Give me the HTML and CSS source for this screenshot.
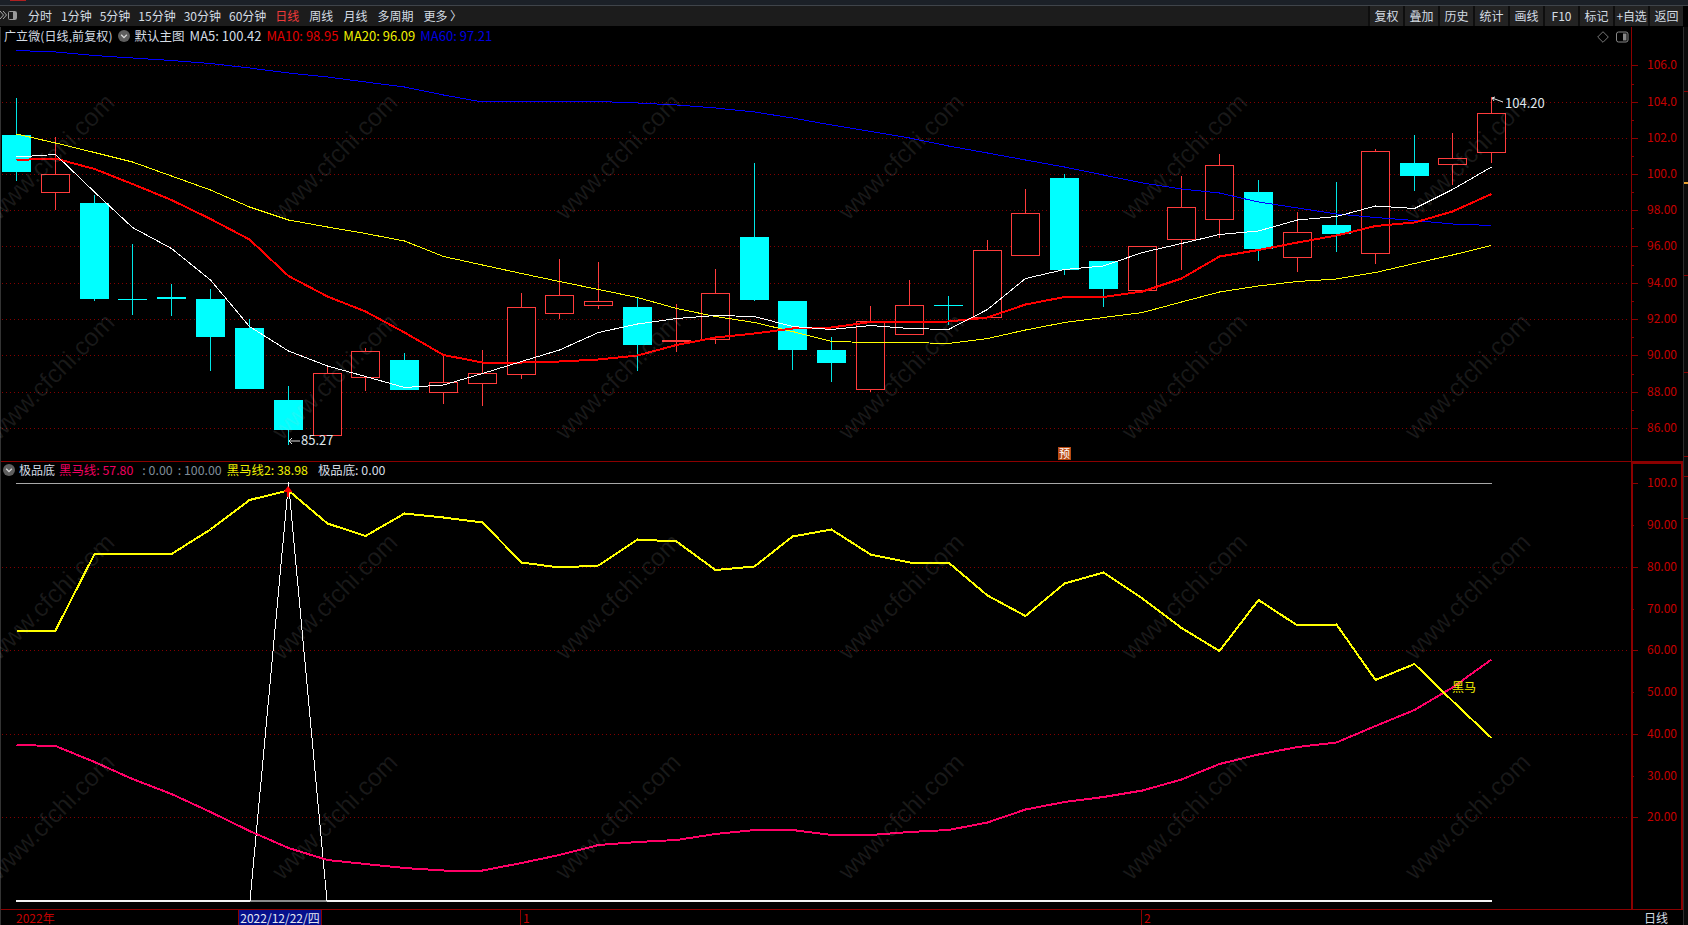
FILE: index.html
```html
<!DOCTYPE html>
<html lang="zh-CN">
<head>
<meta charset="utf-8">
<title>广立微 K线</title>
<link rel="stylesheet" href="styles.css">
</head>
<body>
<div class="titlestrip"><span class="titlemark"></span></div>
<header class="toolbar">
  <svg class="panel-toggle" width="18" height="12" viewBox="0 0 18 12"><path d="M0 1l3.5 4L0 9M3 1l3.5 4L3 9" fill="none" stroke="#a9a9a9"/><rect x="8.5" y="1.5" width="8" height="8" rx="1" fill="none" stroke="#9a9a9a"/><rect x="13" y="2" width="3" height="7" fill="#9a9a9a"/></svg>
  <nav class="periods">
    <span class="cn">分时</span><span>1分钟</span><span>5分钟</span><span>15分钟</span><span>30分钟</span><span>60分钟</span>
    <span class="cn active">日线</span><span class="cn">周线</span><span class="cn">月线</span><span class="cn">多周期</span><span class="cn">更多 〉</span>
  </nav>
  <div class="actions">
    <span>复权</span><span>叠加</span><span>历史</span><span>统计</span><span>画线</span><span>F10</span><span>标记</span><span class="tight">+自选</span><span>返回</span>
  </div>
</header>
<main class="workspace">
  <div class="charts">
    <section class="pane price">
      <div class="plot">
        <svg id="priceChart" class="chart" width="1631" height="434" viewBox="0 27 1631 434"></svg>
        <div class="legend">
          <span class="name title">广立微(日线,前复权)</span>
          <svg class="chevron" width="12" height="12" viewBox="0 0 12 12"><circle cx="6" cy="6" r="6" fill="#5e5e5e"/><path d="M3.2 4.8L6 7.6l2.8-2.8" fill="none" stroke="#d8d8d8" stroke-width="1.3"/></svg>
          <span class="name cjk">默认主图</span>
          <span class="name">MA5: 100.42</span>
          <span class="red">MA10: 98.95</span>
          <span class="yellow">MA20: 96.09</span>
          <span class="blue">MA60: 97.21</span>
        </div>
        <div class="plot-tools">
          <svg width="12" height="12" viewBox="0 0 12 12"><path d="M6 .7L11.3 6 6 11.3.7 6z" fill="none" stroke="#777"/></svg>
          <svg width="13" height="12" viewBox="0 0 13 12"><rect x=".5" y="1" width="11.5" height="10" rx="2" fill="none" stroke="#888"/><rect x="7" y="2.5" width="3.5" height="7" fill="#888"/></svg>
        </div>
        <span class="note note-high">104.20</span>
        <span class="note note-low">85.27</span>
        <span class="badge">预</span>
      </div>
      <div class="axis" id="priceAxis"></div>
    </section>
    <section class="pane indicator">
      <div class="plot">
        <svg id="indicatorChart" class="chart" width="1631" height="447" viewBox="0 462 1631 447"></svg>
        <div class="legend lower">
          <svg class="chevron first" width="12" height="12" viewBox="0 0 12 12"><circle cx="6" cy="6" r="6" fill="#5e5e5e"/><path d="M3.2 4.8L6 7.6l2.8-2.8" fill="none" stroke="#d8d8d8" stroke-width="1.3"/></svg>
          <span class="name cjk">极品底</span>
          <span class="pink">黑马线: 57.80</span>
          <span class="muted gap-a">: 0.00</span>
          <span class="muted">: 100.00</span>
          <span class="yellow">黑马线2: 38.98</span>
          <span class="name gap-b">极品底: 0.00</span>
        </div>
        <span class="note note-horse">黑马</span>
      </div>
      <div class="axis boxed" id="indicatorAxis"></div>
    </section>
    <footer class="timeline">
      <div class="dates">
        <span class="year">2022年</span>
        <span class="current-date">2022/12/22/四</span>
        <span class="month month-jan">1</span>
        <span class="month month-feb">2</span>
      </div>
      <div class="period-label">日线</div>
    </footer>
  </div>
  <aside class="sidebar" id="sidebar"></aside>
</main>
<script src="chart.js"></script>
</body>
</html>
```
FILE: styles.css
```css
* { box-sizing: border-box; }
html, body { margin: 0; height: 100%; }
body {
  width: 1688px;
  height: 925px;
  overflow: hidden;
  background: #000;
  color: #d4dce4;
  font: 12px/16px "Noto Sans CJK SC", "Noto Sans", sans-serif;
  display: flex;
  flex-direction: column;
}
.titlestrip {
  height: 6px;
  background: #1b2027;
  border-bottom: 1px solid #3f444a;
  padding-left: 10px;
  flex: none;
}
.titlemark { display: block; width: 16px; height: 1px; background: #b02020; }
.toolbar {
  height: 21px;
  flex: none;
  display: flex;
  align-items: center;
  background: #1c1c1c;
  border-bottom: 1px solid #000;
  width: 1683px;
  position: relative;
}
.panel-toggle { flex: none; margin-left: 0; }
.periods { display: flex; gap: 8px; margin-left: 9px; white-space: nowrap; }
.periods .cn { padding: 0 1px; }
.periods .active { color: #f03a3a; }
.actions { margin-left: auto; display: flex; height: 20px; }
.actions span {
  width: 35px;
  text-align: center;
  line-height: 19px;
  background: #232323;
  border-left: 2px solid #0e0e0e;
  white-space: nowrap;
}
.actions .tight { letter-spacing: -0.3px; }
.workspace { flex: 1; display: flex; min-height: 0; }
.charts { width: 1683px; display: flex; flex-direction: column; border-left: 1px solid #333; }
.pane { display: flex; flex: none; }
.pane.price { height: 434px; }
.pane.indicator { height: 448px; border-top: 1px solid #8b0000; }
.plot { position: relative; width: 1630px; flex: none; }
.chart { position: absolute; left: -1px; top: 0; display: block; }
.legend {
  position: relative;
  display: flex;
  align-items: center;
  height: 20px;
  padding: 0 0 2px 3px;
  white-space: nowrap;
  gap: 5px;
  font-size: 13px;
}
.legend.lower { height: 17px; padding: 0 0 2px 2px; gap: 5px; font-size: 12.4px; }
.legend.lower .cjk { font-size: 12px; margin-right: -1px; }
.legend .title { font-size: 12px; letter-spacing: 0.1px; }
.legend .cjk { font-size: 12.5px; }
.chevron { flex: none; }
.chevron.first { margin-right: -1px; }
.red { color: #e00000; }
.yellow { color: #f0f000; }
.blue { color: #0000e0; }
.pink { color: #f00060; }
.muted { color: #7f8c98; }
.gap-a { margin-left: 4px; }
.gap-b { margin-left: 5px; }
.plot-tools {
  position: absolute;
  right: 2px;
  top: 4px;
  display: flex;
  gap: 7px;
  align-items: center;
}
.note { position: absolute; white-space: nowrap; color: #dfe6ec; font-size: 13px; }
.note-high { left: 1504px; top: 68px; }
.note-low { left: 300px; top: 405px; }
.note-horse { left: 1451px; top: 217px; color: #f4f000; font-size: 12px; }
.badge {
  position: absolute;
  left: 1057px;
  top: 420px;
  width: 13px;
  height: 13px;
  background: #b84a12;
  color: #fff;
  font-size: 11px;
  line-height: 13px;
  text-align: center;
}
.axis {
  width: 52px;
  flex: none;
  position: relative;
  border-left: 1px solid #8b0000;
}
.axis.boxed {
  border: solid #8b0000;
  border-width: 2px 2px 0 2px;
}
.tick { position: absolute; left: 0; height: 1px; background: #8b0000; width: 6px; }
.tick.minor { width: 2px; }
.axis.boxed .tick { left: -1px; }
.tick-label { position: absolute; left: 15px; color: #c40000; white-space: nowrap; }
.axis.boxed .tick-label { left: 14px; }
.timeline {
  height: 16px;
  flex: none;
  display: flex;
  border-top: 1px solid #8b0000;
}
.dates { position: relative; width: 1630px; flex: none; color: #c40000; line-height: 15px; }
.year { position: absolute; left: 15px; }
.current-date {
  position: absolute;
  left: 237px;
  width: 84px;
  height: 15px;
  background: #06108c;
  border: solid #8b0000;
  border-width: 0 1px;
  color: #e4e8f0;
  text-align: center;
}
.month { position: absolute; border-left: 1px solid #8b0000; padding-left: 2px; height: 15px; }
.month-jan { left: 519px; }
.month-feb { left: 1140px; }
.period-label { flex: 1; padding-left: 13px; line-height: 15px; color: #d4dce4; }
.sidebar { width: 5px; flex: none; position: relative; background: #0a0a0a; border-left: 1px solid #2c2c2c; }
.mark { position: absolute; left: 0; width: 4px; height: 1px; background: #8b0000; }
.mark.warn { background: #e8a030; height: 2px; }
.grid { stroke: #840000; stroke-width: 1; stroke-dasharray: 1 3; shape-rendering: crispEdges; }
.up { stroke: #ff3c3c; stroke-width: 1; shape-rendering: crispEdges; }
.wick-up { stroke: #ff3c3c; stroke-width: 1; shape-rendering: crispEdges; }
.down { fill: #00ffff; shape-rendering: crispEdges; }
.wick-down { stroke: #00e6e6; stroke-width: 1; shape-rendering: crispEdges; }
.line { fill: none; shape-rendering: crispEdges; stroke-linejoin: round; }
.ma5 { stroke: #fff; stroke-width: 1; }
.ma10 { stroke: #ff0000; stroke-width: 2; }
.ma20 { stroke: #ffff00; stroke-width: 1; }
.ma60 { stroke: #0000ff; stroke-width: 1; }
.horse1 { stroke: #ff0066; stroke-width: 2; }
.horse2 { stroke: #ffff00; stroke-width: 2; }
.spike { stroke: #fff; stroke-width: 1; }
.top-rule { stroke: #a8a8a8; stroke-width: 1; shape-rendering: crispEdges; }
.zero-rule { stroke: #f2f2f2; stroke-width: 2; shape-rendering: crispEdges; }
.zero-dim { stroke: #8a8a8a; stroke-width: 2; shape-rendering: crispEdges; }
.pointer { stroke: #e0e0e0; stroke-width: 1; fill: none; }
.arrow-red { fill: #ff0000; }
.watermark {
  font: 25px "Liberation Sans", Arial, sans-serif;
  fill: #c8c8c8;
  fill-opacity: 0.12;
}
```
FILE: chart.js
```js
var SVG = 'http://www.w3.org/2000/svg';
function el(parent, tag, attrs, text) {
  var n = document.createElementNS(SVG, tag);
  for (var k in attrs) n.setAttribute(k, attrs[k]);
  if (text) n.textContent = text;
  parent.appendChild(n);
  return n;
}
function line(p, x1, y1, x2, y2, cls) { el(p, 'line', { x1: x1, y1: y1, x2: x2, y2: y2, 'class': cls }); }
function poly(p, pts, cls) { el(p, 'polyline', { points: pts.map(function (q) { return q.join(','); }).join(' '), 'class': 'line ' + cls }); }
function cx(i) { return Math.floor(16.5 + 38.82 * i) + 0.5; }
function series(ys) { return ys.map(function (y, i) { return [cx(i), y]; }); }

/* high, body top, body bottom, low, colour (u = up, d = down) */
var candles = [
  [98,135,172,181,'d'],[137,174,192,210,'u'],[195,203,299,301,'d'],[244,299,299,315,'d'],
  [284,297,299,316,'d'],[289,299,337,371,'d'],[319,328,389,389,'d'],[386,400,430,445,'d'],
  [367,373,435,435,'u'],[348,351,377,391,'u'],[353,360,390,390,'d'],[356,382,392,404,'u'],
  [350,373,383,406,'u'],[293,307,374,379,'u'],[259,295,313,319,'u'],[262,301,305,309,'u'],
  [297,307,345,371,'d'],[304,340,341,352,'f'],[269,293,339,344,'u'],[163,237,300,301,'d'],
  [301,301,350,370,'d'],[337,350,363,382,'d'],[306,321,389,392,'u'],[280,305,334,334,'u'],
  [296,305,305,325,'d'],[240,250,317,317,'u'],[189,213,255,255,'u'],[174,178,270,275,'d'],
  [261,261,289,307,'d'],[246,246,290,290,'u'],[176,207,239,270,'u'],[154,165,219,238,'u'],
  [180,192,249,261,'d'],[212,232,257,272,'u'],[182,225,234,252,'d'],[149,151,253,264,'u'],
  [135,163,176,191,'d'],[133,158,164,185,'u'],[97,113,152,163,'u']
];
var ma5 = [157,154.5,192,227.5,248.5,280,326.5,351,366,376.5,387.5,385,373.5,361.5,350,332.5,324,318.5,315.5,316.5,326.5,329.5,325.5,328.5,329.5,309.5,278.5,269.5,266,252.5,243.5,234.5,231,220,216.5,206,208.5,189.5,167];
var ma10 = [160,158.5,169,184,200,219,239.5,276,296.5,311.5,332.5,355,362.5,362.5,361.5,359.5,355.5,345,337.5,333.5,328.5,327.5,322,322,321.5,317.5,304.5,297,297,291.5,278.5,256.5,250,242.5,235.5,226,222.5,211.5,194];
var ma20 = [134,143,152.5,162,176,190,207,220,227,233.5,241,256.5,265,273.5,281.5,289.5,297.5,308.5,316.5,322.5,331.5,341.5,342.5,342.5,343.5,338.5,330,322.5,317.5,312.5,302,292,286,281.5,279,272.5,263.5,255,245.5];
var ma60 = [50.5,52,55.5,58,60.5,63.5,68,73,77,82,87,95,102,101.5,101.5,101.5,103,105,108,112,118,125,131.5,138,146,153,160,167,175,183,189,193,202,208,214,217.5,220.5,224,225.5];
var horse1 = [745,746,762,779,794,812,831,848,860,864,868,870.5,870.5,863,855,845,842,840,834,830,830,835,835,832,830,822.5,809.5,802,797,790.5,779.5,764,754.5,747,742.5,726,710,687.5,659.5];
var horse2 = [630.5,630.5,554,554,554,529.5,500,490.5,523.5,536,513.5,517.5,522.5,562.5,567.5,565.5,539.5,541.5,570,566.5,536.5,529.5,554.5,562.5,562.5,595.5,616,583.5,572.5,598.5,628,651,600,625.5,624.5,680,664,701,738];

/* price pane */
var p = document.getElementById('priceChart');
[65.5,102.5,138.5,174.5,210.5,246.5,283.5,319.5,355.5,392.5,428.5].forEach(function (y) { line(p, 2, y, 1628, y, 'grid'); });
candles.forEach(function (c, i) {
  var x = cx(i), kind = c[4], up = kind !== 'd';
  line(p, x, c[0], x, c[3], up ? 'wick-up' : 'wick-down');
  if (kind === 'u') {
    el(p, 'rect', { x: x - 14, y: c[1] + 0.5, width: 28, height: c[2] - c[1], fill: '#000', 'class': 'up' });
  } else if (kind === 'f') {
    el(p, 'rect', { x: x - 14.5, y: c[1], width: 29, height: 2, fill: '#ff3c3c' });
  } else {
    var h = Math.max(c[2] - c[1], 1);
    el(p, 'rect', { x: x - 14.5, y: c[1], width: 29, height: h, 'class': 'down' });
  }
});
poly(p, series(ma60), 'ma60');
poly(p, series(ma20), 'ma20');
poly(p, series(ma10), 'ma10');
poly(p, series(ma5), 'ma5');
/* extreme-value pointers */
line(p, 1492, 98, 1503, 102, 'pointer');
line(p, 1492, 98, 1495, 97, 'pointer');
line(p, 1492, 98, 1494, 101, 'pointer');
line(p, 289, 441, 300, 441, 'pointer');
line(p, 289, 441, 292, 438, 'pointer');
line(p, 289, 441, 292, 444, 'pointer');

/* indicator pane */
var q = document.getElementById('indicatorChart');
[567.5,650.5,734.5,817.5].forEach(function (y) { line(q, 2, y, 1628, y, 'grid'); });
line(q, 16, 483.5, 1492, 483.5, 'top-rule');
line(q, 16, 901, 1492, 901, 'zero-rule');
line(q, 250, 901, 327, 901, 'zero-dim');
poly(q, [[250, 901], [288.5, 483], [327, 901]], 'spike');
poly(q, series(horse1), 'horse1');
poly(q, series(horse2), 'horse2');
el(q, 'path', { d: 'M288 486l4.5 6h-3.4v5h-2.2v-5h-3.4z', 'class': 'arrow-red' });

/* repeated diagonal watermark, split over the two panes */
function marks(svg, rows) {
  rows.forEach(function (y) {
    for (var k = 0; k < 6; k++) {
      var x = -1 + 283.2 * k;
      el(svg, 'text', { x: x, y: y, 'class': 'watermark', transform: 'rotate(-45 ' + x + ' ' + y + ')' }, 'www.cfchi.com');
    }
  });
}
marks(p, [221, 441]);
marks(q, [661, 881]);

/* axes */
function axis(id, ticks, labels, offset) {
  var a = document.getElementById(id);
  ticks.forEach(function (t) {
    var d = document.createElement('div');
    d.className = 'tick' + (t[1] ? '' : ' minor');
    d.style.top = (t[0] - offset) + 'px';
    a.appendChild(d);
  });
  labels.forEach(function (l) {
    var d = document.createElement('div');
    d.className = 'tick-label';
    d.textContent = l[1];
    d.style.top = (l[0] - offset - 9) + 'px';
    a.appendChild(d);
  });
}
var upper = [65,102,138,174,210,246,283,319,355,392,428];
var upperText = ['106.0','104.0','102.0','100.0','98.00','96.00','94.00','92.00','90.00','88.00','86.00'];
var upperTicks = [];
upper.forEach(function (y, i) {
  upperTicks.push([y, true]);
  if (i < upper.length - 1) upperTicks.push([Math.round((y + upper[i + 1]) / 2), false]);
});
axis('priceAxis', upperTicks, upper.map(function (y, i) { return [y, upperText[i]]; }), 27);
var lowerY = [483,525,567,609,650,692,734,776,817];
var lowerText = ['100.0','90.00','80.00','70.00','60.00','50.00','40.00','30.00','20.00'];
axis('indicatorAxis', lowerY.map(function (y, i) { return [y, i % 2 === 0]; }),
  lowerY.map(function (y, i) { return [y, lowerText[i]]; }), 464);

/* overview marks on the thin strip at the right edge */
var side = document.getElementById('sidebar');
[[64, ''], [155, 'warn'], [248, ''], [345, ''], [429, ''], [449, ''], [491, '']].forEach(function (m) {
  var d = document.createElement('div');
  d.className = 'mark ' + m[1];
  d.style.top = m[0] + 'px';
  side.appendChild(d);
});
```
